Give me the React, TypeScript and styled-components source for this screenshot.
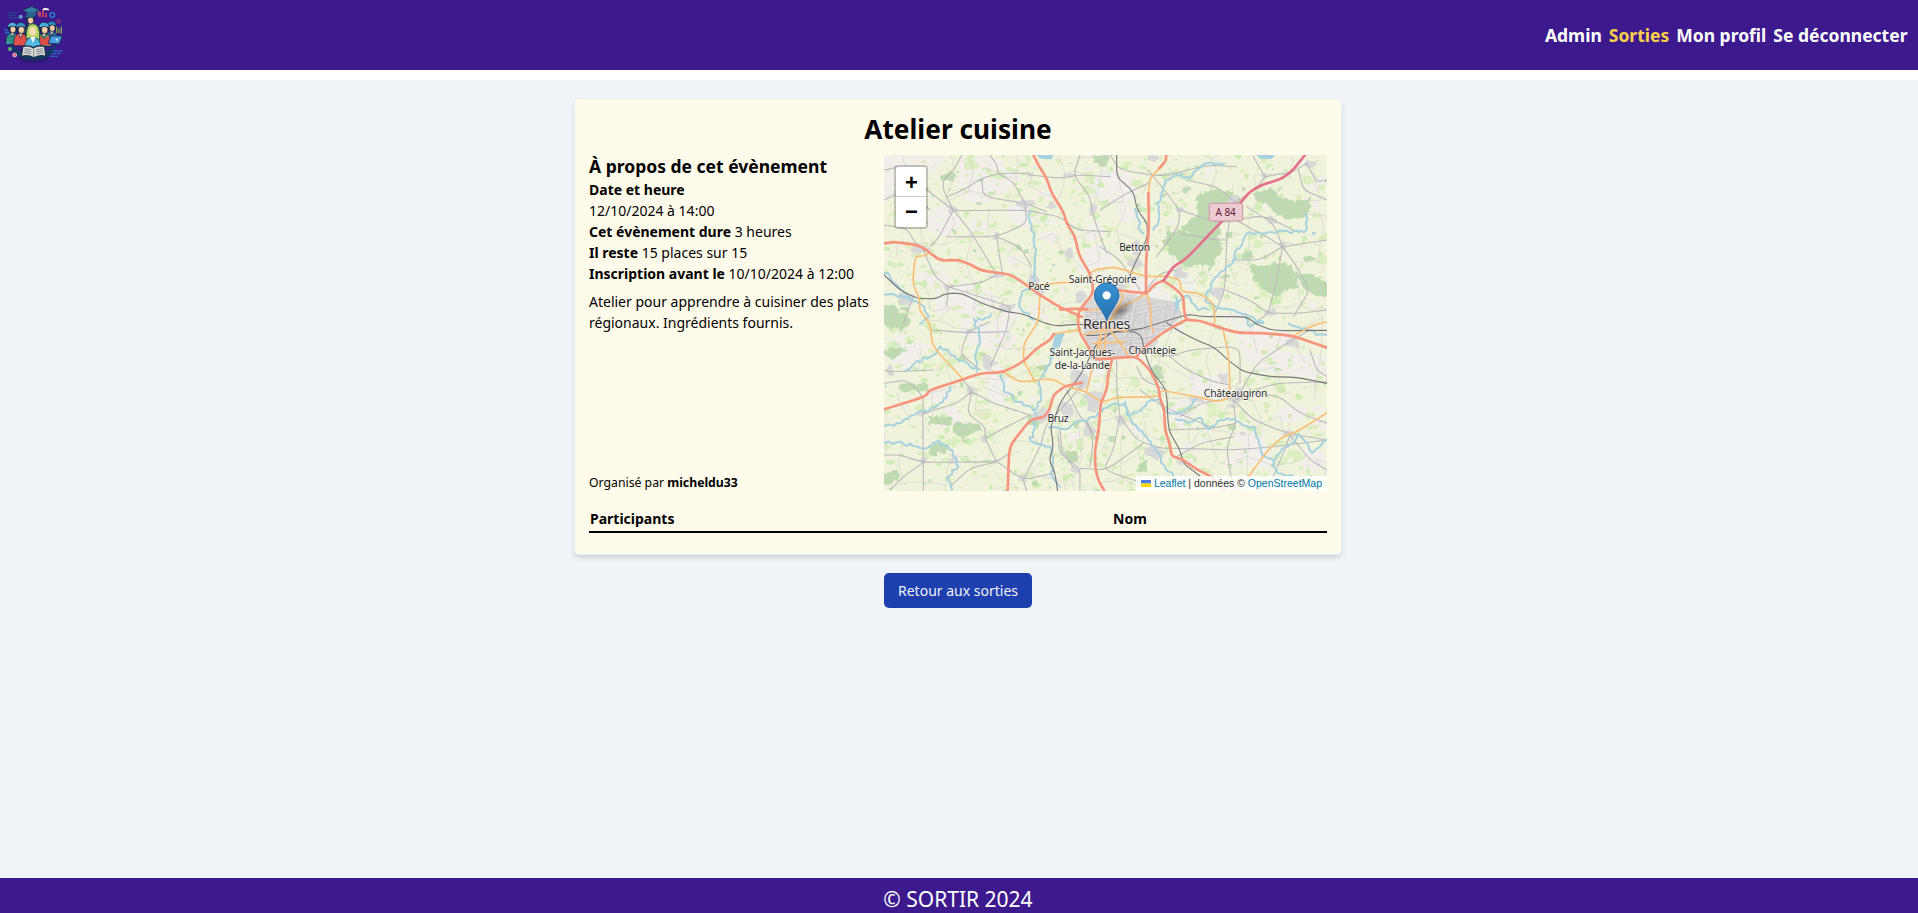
import React from "react";
import styled, { createGlobalStyle } from "styled-components";

const GlobalStyle = createGlobalStyle`
  *, *::before, *::after { box-sizing: border-box; }
  html { font-size: 14px; }
  body {
    margin: 0;
    background: #fff;
    color: #000;
    font-family: "Noto Sans", sans-serif;
    line-height: 1.5;
  }
  h1, h2, p { margin: 0; }
  a { color: inherit; text-decoration: none; }
`;

const Page = styled.div`
  display: flex;
  flex-direction: column;
  height: 100vh;
  overflow: hidden;
`;

const Header = styled.header`
  display: flex;
  align-items: center;
  justify-content: space-between;
  flex: none;
  height: 70px;
  margin-bottom: 10px;
  padding-right: 10.5px;
  background: #3c1a8e;
`;

const LogoLink = styled.a`
  display: block;
  width: 70px;
  height: 70px;
`;

const Nav = styled.nav`
  display: flex;
  gap: 7px;
`;

const NavLink = styled.a<{ $active?: boolean }>`
  color: ${(p) => (p.$active ? "#fdd145" : "#fff")};
  font-size: 17.5px;
  line-height: 24.5px;
  font-weight: 700;
`;

const Main = styled.main`
  display: flex;
  flex: 1;
  flex-direction: column;
  align-items: center;
  padding: 18px 2px 0 0;
  background: #f0f4f8;
`;

const Card = styled.section`
  width: 768px;
  height: 457px;
  padding: 14px;
  border: 1px solid #ebeff5;
  border-radius: 5px;
  background: #fffbeb;
  box-shadow: 0 4px 6px -1px rgba(0, 0, 0, 0.1), 0 2px 4px -2px rgba(0, 0, 0, 0.1);
`;

const Title = styled.h1`
  height: 42px;
  padding-top: 1px;
  font-size: 26.25px;
  line-height: 31.5px;
  font-weight: 700;
  text-align: center;
`;

const Columns = styled.div`
  display: grid;
  grid-template-columns: 295px 443px;
  height: 336px;
`;

const Details = styled.div`
  display: flex;
  flex-direction: column;
  margin-top: -1px;
  font-size: 14px;
  line-height: 21px;
`;

const Subtitle = styled.h2`
  font-size: 17.5px;
  line-height: 24.5px;
  font-weight: 700;
`;

const Description = styled.p`
  margin-top: 7px;
`;

const Organizer = styled.p`
  margin-top: auto;
  font-size: 12.25px;
  line-height: 17.5px;
`;

const Table = styled.table`
  width: 100%;
  margin-top: 15px;
  border-collapse: collapse;
  border-bottom: 2px solid #000;
`;

const HeadCell = styled.th<{ $width: string }>`
  width: ${(p) => p.$width};
  height: 26px;
  padding: 1px 1px 2px;
  font-size: 14px;
  line-height: 21px;
  text-align: left;
`;

const BackButton = styled.a`
  margin-top: 18px;
  padding: 7px 14px;
  border-radius: 5px;
  background: #1e40af;
  color: #eef2fb;
  font-size: 14px;
  line-height: 21px;
`;

const Footer = styled.footer`
  flex: none;
  height: 35px;
  padding: 7px 2px 0 0;
  background: #3c1a8e;
  color: #fff;
  font-size: 21px;
  line-height: 28px;
  text-align: center;
`;

const MapFrame = styled.div`
  position: relative;
  overflow: hidden;
  background: #eef0d8;
  font-family: "Liberation Sans", Arial, sans-serif;
`;

const MapDrawing = styled.svg`
  display: block;
  width: 443px;
  height: 336px;
`;

const ZoomControl = styled.div`
  position: absolute;
  top: 10px;
  left: 10px;
  border: 2px solid rgba(0, 0, 0, 0.2);
  border-radius: 4px;
  background-clip: padding-box;
`;

const ZoomButton = styled.button<{ $last?: boolean }>`
  display: flex;
  align-items: center;
  justify-content: center;
  width: 30px;
  height: 30px;
  padding: ${(p) => (p.$last ? "0 0 0 1px" : "2px 0 0 1px")};
  border: 0;
  border-bottom: ${(p) => (p.$last ? "0" : "1px solid #ccc")};
  border-radius: ${(p) => (p.$last ? "0 0 2px 2px" : "2px 2px 0 0")};
  background: #fff;
  color: #000;
  font: bold 22px "Liberation Sans", Arial, sans-serif;
  line-height: 28px;
`;

const Attribution = styled.div`
  position: absolute;
  right: 0;
  bottom: 0;
  padding: 0 5px;
  background: rgba(255, 255, 255, 0.8);
  color: #333;
  font-size: 10.5px;
  line-height: 15px;
  white-space: nowrap;
  a { color: #0078a8; }
`;

const Flag = styled.svg`
  display: inline;
  width: 10px;
  height: 7px;
  margin-right: 3px;
`;

type Pt = [number, number];

function random(seed: number) {
  let s = seed;
  return () => {
    s = (s * 1664525 + 1013904223) % 4294967296;
    return s / 4294967296;
  };
}

const parse = (text: string): Pt[] =>
  text.split(" ").map((pair) => pair.split(",").map(Number) as Pt);

/* Rounded polyline through the given points. */
function curve(points: Pt[]): string {
  let d = `M${points[0]}`;
  for (let i = 1; i < points.length - 1; i++) {
    const [x, y] = points[i];
    const [a, b] = points[i - 1];
    const [e, f] = points[i + 1];
    d += `L${x + (a - x) * 0.3} ${y + (b - y) * 0.3}Q${x} ${y} ${x + (e - x) * 0.3} ${y + (f - y) * 0.3}`;
  }
  return d + `L${points[points.length - 1]}`;
}

/* Subdivides a line and shakes the new points, for rivers and wood edges. */
function shake(points: Pt[], step: number, amount: number, seed: number): Pt[] {
  const r = random(seed);
  const out: Pt[] = [];
  for (let i = 0; i < points.length - 1; i++) {
    const [x, y] = points[i];
    const [u, v] = points[i + 1];
    const n = Math.max(1, Math.round(Math.hypot(u - x, v - y) / step));
    for (let k = 0; k < n; k++)
      out.push([
        Math.round(x + ((u - x) * k) / n + (r() - 0.5) * amount),
        Math.round(y + ((v - y) * k) / n + (r() - 0.5) * amount),
      ]);
  }
  out.push(points[points.length - 1]);
  return out;
}

function blob(x: number, y: number, w: number, h: number, r: () => number): string {
  const n = 9;
  let d = "";
  for (let i = 0; i < n; i++) {
    const t = (i / n) * Math.PI * 2;
    const k = 0.45 + r() * 0.75;
    d += `${i ? "L" : "M"}${Math.round(x + Math.cos(t) * w * k)} ${Math.round(y + Math.sin(t) * h * k)}`;
  }
  return d + "Z";
}

function scatter(seed: number, count: number, min: number, max: number): string {
  const r = random(seed);
  let d = "";
  for (let i = 0; i < count; i++) {
    const x = 12 + r() * 1329;
    const y = 15 + r() * 1008;
    const s = min + Math.pow(r(), 2.2) * (max - min);
    d += blob(x, y, s * (0.6 + r()), s * (0.5 + r() * 0.7), r);
  }
  return d;
}

/* Irregular mesh of country lanes. */
function lanes(): string {
  const r = random(77);
  const cols = 21;
  const rows = 16;
  const grid: Pt[][] = [];
  for (let j = 0; j <= rows; j++) {
    grid.push([]);
    for (let i = 0; i <= cols; i++)
      grid[j].push([i * 66 + (r() - 0.5) * 56, j * 66 + (r() - 0.5) * 56]);
  }
  let d = "";
  const link = (a: Pt, b: Pt) => {
    d += curve(shake([a, b], 24, 9, Math.floor(r() * 9999)).map((p, i) => (i ? p : a)));
  };
  for (let j = 0; j < rows; j++)
    for (let i = 0; i < cols; i++) {
      if (r() < 0.4) link(grid[j][i], grid[j][i + 1]);
      if (r() < 0.4) link(grid[j][i], grid[j + 1][i]);
    }
  return d;
}

/* Dense street mesh clipped to the city. */
function streets(): string {
  const r = random(12);
  let d = "";
  for (let i = 0; i < 20; i++) {
    const o = 570 + i * 18;
    d += `M${o} 430L${o + (r() - 0.5) * 70} 500L${o + (r() - 0.5) * 90} 640`;
    const p = 430 + i * 11;
    d += `M590 ${p}L720 ${p + (r() - 0.5) * 60}L900 ${p + (r() - 0.5) * 70}`;
  }
  return d;
}

const trunkRoads = [
  "12,280 45,276 110,285 135,297 180,332 235,330 270,343 305,362 390,373 425,395 480,435 540,472 605,500",
  "540,478 600,476 622,478",
  "460,15 475,45 500,85 515,130 550,185 560,220 585,260 597,315 635,380 640,430 606,470 595,490 594,520 600,550 625,590 645,630 700,624 770,620 810,660 835,710 840,745 853,780 855,840 870,885 875,918 910,930 950,958 995,980 1035,1023",
  "858,15 858,32 838,55",
  "805,130 807,235 798,330 798,420 800,430",
  "850,392 825,402 800,430 745,425 720,420 690,424",
  "850,392 885,415 910,440 912,480 918,510 960,512 1010,530 1070,548 1160,550 1240,558 1341,593",
  "918,510 870,535 840,555 790,595 770,620",
  "697,626 685,670 680,720 662,760 656,840 645,900 646,955 655,990 673,1023",
  "383,1023 387,910 395,880 450,810 495,800 510,775 520,735 555,708 605,698",
  "12,778 135,740 150,720 250,688 300,670 370,667 430,635 470,595 510,570 522,552",
].map(parse);

const mainRoads = [
  "150,308 135,317 105,320 98,400 120,450 118,480 150,522 158,590 250,688",
  "445,405 510,403 530,398 605,397 640,360 690,353 710,353 800,380 860,378 900,390 903,425 960,430 1000,460 1005,510 1000,528",
  "480,435 475,515 432,580 430,632 465,695",
  "370,667 420,697 515,685 560,710 620,725 665,758 710,742 835,740 845,720 900,732 950,740 1010,755 1045,745 1050,710 1046,610 1028,535",
  "1341,788 1260,840 1205,862 1160,905 1105,980",
  "522,552 560,545 598,540", "620,725 640,640", "1245,555 1300,525 1341,516",
  "838,55 810,85 806,130", "600,482 655,478 690,474", "800,430 760,455 720,470 700,500 665,540 650,600",
  "800,430 812,470 812,525 820,545", "605,555 690,535 745,545", "720,420 730,440 715,470 690,515",
  "690,540 735,600 745,620", "665,540 660,580 665,620", "640,580 735,575", "680,515 672,620",
].map(parse);

const railways = [
  "12,375 60,420 110,445 165,447 200,430 245,430 310,462 380,485 430,492 490,518 530,528 600,522 650,530",
  "620,556 655,556 720,545 790,535 860,512 925,493 970,500 1100,500 1130,523 1180,542 1341,541",
  "700,545 765,545 785,560 795,610 815,665 860,720 865,840 900,900 910,940 960,978",
  "860,518 900,545 960,575 1000,590 1050,635 1090,665 1170,680 1250,682 1341,700",
  "710,15 710,80 760,125 772,180 802,220 802,265 760,350 748,385",
  "700,545 650,580 630,620 610,660 580,705 545,750 525,800 512,830 520,890 508,930 525,970 533,1023",
].map(parse);

const rivers = [
  "455,180 445,215 465,260 460,340 462,395 430,430 420,470 450,495 460,510",
  "12,365 50,400 90,450 125,465 145,500 120,522",
  "12,438 60,435 90,450",
  "285,510 300,560 290,610 290,665",
  "80,665 100,640 160,615 185,590 230,630 290,655",
  "12,830 60,820 90,795 140,782 190,760 210,710",
  "12,880 60,878 130,895 180,875 215,905 235,950 205,980 215,1023",
  "365,675 375,720 400,745 460,780 480,750 480,690 510,640 520,590 545,555",
  "470,790 460,840 450,875 515,892",
  "510,830 560,840 610,810 650,800 670,775 735,757 745,800 790,780 800,755 840,750 860,790 905,790 950,745",
  "890,805 920,820 960,800 985,835 1010,810 1060,805 1090,830 1125,835 1145,920 1180,930 1210,900 1240,880 1260,855 1300,905 1341,870",
  "735,760 755,820 790,850 830,900 850,950 880,980",
  "1183,930 1188,970 1240,980",
  "1035,45 980,42 950,60 930,85 890,75 860,95 850,130 835,160 840,200 820,240",
  "1280,195 1275,245 1230,245 1160,250 1100,250 1078,290 1055,340 1010,380 985,425",
  "768,180 780,215 775,240 790,250",
  "985,425 975,450 1010,475 1090,490 1110,500 1150,520",
  "890,440 885,480 920,435 950,475 985,480",
  "1100,500 1110,525 1150,515",
  "1230,520 1290,545 1341,555",
  "335,490 310,510 285,512", "515,892 520,950 515,975 540,1010",
].map((t, i) => shake(parse(t), 10, 11, 40 + i));

const grayRoads = [
  "245,15 225,55 190,90 190,120 220,180", "330,15 350,45 355,70 400,97 435,160", "218,182 435,180 540,200 590,240 690,245",
  "220,180 265,235 300,290 350,375", "220,180 175,265 150,290", "12,60 60,50 140,120 220,180", "12,150 80,120 150,180",
  "305,85 310,140 435,160 500,185", "305,85 250,120 200,140", "305,85 360,70 450,70", "450,75 540,85 600,75 690,80",
  "600,15 580,75 630,140 640,200 680,310", "435,165 440,220 350,260 200,260", "350,260 360,330 370,380", "350,260 420,290 455,350",
  "12,225 80,235 110,285", "130,300 165,380 205,410 200,470", "205,410 300,400 350,375", "390,470 300,440 205,410",
  "100,440 70,520", "390,470 380,540 330,650", "158,540 260,548 385,545", "265,545 330,515", "265,545 240,610 300,660",
  "12,660 30,665 160,660", "12,700 80,690 130,740 128,790 130,935", "275,725 250,690", "275,725 340,760 450,795", "275,725 230,760 130,790",
  "275,725 262,790 315,830 315,865 350,935", "315,865 380,830 450,795", "12,915 60,915 130,937 220,937 350,935 387,910",
  "130,937 130,1023", "130,937 70,980 30,1020", "350,935 430,990 520,970", "350,935 270,955 210,1010", "430,990 440,1023",
  "480,890 430,990", "480,890 500,820 560,760 610,700", "535,860 540,910 600,955 600,1023", "600,955 680,960 790,880",
  "620,810 640,870 630,950", "560,720 600,800 620,820 650,870", "540,840 545,900 580,950",
  "690,15 720,60 850,80 980,45 1070,50", "660,180 740,130 805,100", "660,290 720,330 780,420", "805,60 900,180 895,230 830,320",
  "900,180 960,200 1020,220 1150,195 1240,240", "900,250 1010,270 1040,270", "1048,215 1040,270 1035,420 1000,500",
  "920,90 1010,110 1070,160", "1060,160 1130,115 1155,80", "1155,80 1120,20", "1155,80 1240,65 1280,40", "1280,40 1310,95 1341,90",
  "1255,60 1270,120 1341,150", "1070,210 1120,240 1160,260 1208,290", "1208,290 1140,330 1060,330", "1208,290 1190,390 1165,490 1120,522",
  "1208,290 1250,350 1290,420 1240,500", "1208,290 1341,270", "1208,290 1180,220 1100,170", "1035,420 1110,450 1165,490 1260,490 1341,480",
  "890,360 840,370 780,440", "870,620 920,660 1000,695 1050,705", "780,600 870,620 930,600 1046,590", "770,650 790,690 860,720",
  "710,630 710,720 720,800", "720,800 770,870 840,895 890,895 1060,900 1180,890 1341,870", "720,800 700,900 670,960 790,1000",
  "1060,750 1068,820 1040,890 1050,970 1070,1023", "1068,820 1000,835 865,840", "1068,750 1150,710 1200,700 1341,695",
  "1068,750 1130,640 1220,580 1290,540", "1060,750 1120,810 1220,850 1341,870", "1130,730 1200,740 1260,790 1341,820",
  "1050,745 960,760 900,800", "1290,600 1310,660 1341,680", "1230,855 1210,910 1160,1023", "1080,700 1080,600 1046,590",
  "1230,855 1290,930 1341,960", "890,920 960,880 1060,860", "780,720 850,770 1000,835",
].map(parse);

const forests = [
  "950,140 990,120 1050,125 1085,150 1060,190 1000,215 990,250 940,250 905,240 955,190",
  "860,245 905,240 940,255 1015,255 1030,300 1000,345 920,348 880,320 850,275",
  "905,235 960,190 1030,195 1015,265 940,260",
  "1120,130 1170,115 1210,145 1250,155 1290,140 1290,190 1255,208 1200,200 1160,165 1130,155",
  "1110,345 1160,350 1180,335 1240,350 1260,410 1210,425 1190,440 1150,415 1120,385",
  "1250,365 1300,380 1341,390 1341,440 1290,430 1260,400", "1090,305 1120,305 1120,325 1085,335",
  "12,470 40,465 65,490 100,510 60,540 12,530", "60,705 140,700 145,725 60,722", "450,795 480,800 470,835 440,820",
  "145,800 220,800 215,825 150,820", "230,815 300,820 300,840 245,865 215,840", "150,890 180,870 205,890 200,905 150,915",
  "555,900 590,900 595,935 560,940", "640,15 685,18 682,50 645,40", "660,15 685,15 680,45 660,50", "810,650 845,645 845,690 815,680",
  "180,75 215,65 235,80 210,95 185,92", "12,970 50,965 60,985 30,1000 12,1000", "480,650 510,645 500,665",
  "770,960 800,930 805,970", "1100,800 1110,810 1105,825", "12,600 65,590 80,605 40,625 12,620",
].map((t, i) => {
  const p = parse(t);
  return "M" + shake([...p, p[0]], 8, 12, 200 + i).join("L") + "Z";
});

const towns: [number, number, number, number][] = [
  [125, 295, 38, 18], [218, 180, 18, 16], [435, 162, 30, 14], [515, 168, 18, 14], [570, 75, 20, 10], [640, 175, 20, 26], [570, 310, 18, 22],
  [350, 255, 12, 14], [80, 445, 34, 20], [205, 410, 16, 12], [385, 472, 30, 16], [460, 390, 28, 22], [480, 425, 24, 18], [325, 640, 28, 26],
  [275, 720, 20, 18], [30, 660, 16, 18], [130, 790, 18, 10], [220, 930, 18, 14], [130, 933, 12, 12], [345, 380, 24, 8], [430, 985, 16, 14],
  [480, 800, 36, 26], [585, 960, 20, 14], [600, 690, 40, 44], [640, 750, 34, 34], [560, 780, 22, 30], [630, 840, 18, 30], [265, 545, 14, 10],
  [655, 620, 46, 24], [770, 575, 60, 40], [720, 810, 16, 26], [825, 905, 30, 26], [1070, 735, 32, 24], [1055, 770, 16, 8], [1030, 685, 16, 22],
  [950, 750, 26, 8], [1230, 852, 20, 12], [1240, 580, 22, 22], [1175, 210, 14, 14], [1060, 150, 20, 20], [1210, 285, 16, 14], [1170, 487, 20, 12],
  [1155, 80, 16, 12], [1290, 40, 24, 14], [1010, 430, 28, 20], [900, 370, 24, 22], [900, 180, 12, 12], [770, 290, 22, 26], [820, 25, 20, 14],
  [450, 75, 14, 10], [600, 440, 24, 20], [1090, 850, 10, 8], [700, 410, 44, 22], [765, 340, 24, 14], [315, 865, 14, 12], [900, 935, 16, 12],
];

const townPath = (() => {
  const r = random(5);
  return towns.map(([x, y, w, h]) => blob(x, y, w, h, r)).join("");
})();

const labels: { text: string; x: number; y: number; w: number; size: number }[] = [
  { text: "Pacé", x: 477, y: 419, w: 64, size: 31 },
  { text: "Saint-Grégoire", x: 668, y: 400, w: 203, size: 31 },
  { text: "Betton", x: 764, y: 304, w: 93, size: 31 },
  { text: "Rennes", x: 680, y: 538, w: 142, size: 43 },
  { text: "Saint-Jacques-", x: 607, y: 619, w: 197, size: 31 },
  { text: "de-la-Lande", x: 607, y: 656, w: 165, size: 31 },
  { text: "Chantepie", x: 817, y: 611, w: 143, size: 31 },
  { text: "Châteaugiron", x: 1067, y: 740, w: 191, size: 31 },
  { text: "Bruz", x: 534, y: 817, w: 63, size: 31 },
];

function Lines({ items, color, width }: { items: Pt[][]; color: string; width: number }) {
  return (
    <path
      d={items.map(curve).join("")}
      fill="none"
      stroke={color}
      strokeWidth={width}
      strokeLinejoin="round"
      strokeLinecap="round"
    />
  );
}

function RegionMap() {
  return (
    <MapDrawing viewBox="12 15 1329 1008" preserveAspectRatio="none">
      <defs>
        <linearGradient id="pin" x1="0" y1="0" x2="0" y2="1">
          <stop offset="0" stopColor="#3a92d4" />
          <stop offset="1" stopColor="#236fae" />
        </linearGradient>
        <radialGradient id="shade">
          <stop offset="0" stopColor="#333" stopOpacity=".55" />
          <stop offset="1" stopColor="#333" stopOpacity="0" />
        </radialGradient>
        <clipPath id="city">
          <path d="M615 470L680 430L790 440L890 470L905 505L830 555L765 615L650 615L610 560Z" />
        </clipPath>
      </defs>
      <rect x="12" y="15" width="1329" height="1008" fill="#f0f2db" />
      <path d={scatter(3, 110, 10, 75)} fill="#f2eee9" />
      <path d="M12 15H200L170 60L120 90L60 130L12 160ZM240 30L330 20L430 90L300 170L230 130ZM1180 600L1341 620L1341 690L1130 660Z" fill="#f2eee9" />
      <path d={scatter(8, 950, 2, 17)} fill="#dceec0" />
      <path d={scatter(21, 600, 2, 13)} fill="#d0ecb6" />
      <path d={scatter(34, 170, 2, 13)} fill="#c0dcb2" />
      <path d={scatter(55, 240, 1, 4)} fill="#f7dfc8" />
      <path d={forests.join("")} fill="#bfdab1" />
      <path d={scatter(91, 40, 2, 5)} fill="#aad3df" />
      <path d={townPath} fill="#d9d8d9" />
      <path d="M610 470L650 430L740 430L800 442L890 455L908 500L850 540L800 590L750 620L650 625L610 570Z" fill="#d8d5d6" />
      <path d={streets()} clipPath="url(#city)" fill="none" stroke="#e9e7e8" strokeWidth="2" />
      <path d={streets()} clipPath="url(#city)" fill="none" stroke="#c0bdc0" strokeWidth="1.4" transform="translate(6 3)" />
      <path d={lanes()} fill="none" stroke="#cfcfcd" strokeWidth="1.7" />
      <Lines items={grayRoads} color="#b9b8bd" width={3.2} />
      <Lines items={rivers} color="#a6d2e0" width={6} />
      <path d="M525 550L555 545L540 590L515 600ZM470 15H520L515 28L480 26ZM1130 15H1185L1175 27L1140 26Z" fill="#a6d2e0" />
      <Lines items={railways} color="#77777a" width={3.4} />
      <Lines items={mainRoads} color="#fbc078" width={5} />
      <Lines items={trunkRoads} color="#f8947c" width={8} />
      <Lines items={[parse("1275,15 1235,65 1200,88 1145,105 1110,125 1080,160 1010,230 920,325 880,350 850,392")]} color="#e5708c" width={8} />
      <rect x="988" y="160" width="100" height="53" rx="6" fill="#eccbd3" stroke="#d293a5" strokeWidth="3" />
      <text x="1037" y="197" textAnchor="middle" textLength="61" fontSize="30" fontFamily="Noto Sans, sans-serif" fill="#6a1a3c">A 84</text>
      <ellipse cx="722" cy="482" rx="50" ry="24" fill="url(#shade)" transform="rotate(-38 722 482)" />
      {labels.map((l) => (
        <text
          key={l.text}
          x={l.x}
          y={l.y}
          fontSize={l.size}
          textLength={l.w}
          textAnchor="middle"
          fontFamily="Noto Sans, sans-serif"
          fill="#2b2b2b"
          stroke="#fff"
          strokeOpacity=".65"
          strokeWidth="5"
          strokeLinejoin="round"
          paintOrder="stroke"
        >
          {l.text}
        </text>
      ))}
      <path d="M680 513C672 484 643 460 643 435A37 36 0 0 1 717 435C717 460 688 484 680 513Z" fill="url(#pin)" stroke="#2b6fa5" strokeWidth="3" />
      <circle cx="680" cy="436" r="12.5" fill="#fff" />
    </MapDrawing>
  );
}

function Person({ x, y, s, robe, cap }: { x: number; y: number; s: number; robe: string; cap: string }) {
  return (
    <g transform={`translate(${x} ${y}) scale(${s})`} stroke="#12203f" strokeWidth="2">
      <path d="M-20 50Q-22 15 0 14Q22 15 20 50Z" fill={robe} />
      <path d="M-6 14L0 28L6 14Z" fill="#f6e3c8" />
      <circle r="13" fill="#1b2444" />
      <ellipse cx="2" cy="4" rx="9" ry="11" fill="#f8cfa4" />
      <path d="M-14 -1Q-14 -17 0 -17Q14 -17 15 -2Q0 -9 -14 -1Z" fill={cap} />
    </g>
  );
}

function Logo() {
  return (
    <svg width="70" height="70" viewBox="0 0 210 210">
      <path d="M28 128Q100 200 172 128L160 155Q145 178 100 180Q52 178 40 152Z" fill="#123a63" />
      <path d="M24 38H52M24 46H48M26 54H54" stroke="#25418f" strokeWidth="4" />
      <path d="M120 35V52M129 30V52M138 40V52" stroke="#d9485c" strokeWidth="5" />
      <circle cx="157" cy="45" r="7" fill="none" stroke="#2787c9" strokeWidth="4" />
      <circle cx="176" cy="64" r="5" fill="none" stroke="#bd3c6b" strokeWidth="3" />
      <circle cx="62" cy="50" r="6" fill="#5ba5be" />
      <path d="M170 80V100M177 86V100M184 80V101" stroke="#7fa943" strokeWidth="4" />
      <path d="M127 30Q132 20 139 25Q147 23 148 31Z" fill="#f3f7fa" />
      <path d="M12 90H26M15 98H28" stroke="#2967b8" strokeWidth="5" />
      <path d="M160 153H187M155 161H182M150 169H174" stroke="#246fba" strokeWidth="4" strokeDasharray="13 2" />
      <Person x={90} y={57} s={1} robe="#203e62" cap="#286e93" />
      <path d="M67 31L95 19L119 31L92 42Z" fill="#347ba1" stroke="#142443" strokeWidth="2" />
      <path d="M80 37V48Q94 54 108 46V35" fill="#28618a" />
      <path d="M115 33V47" stroke="#eab65a" strokeWidth="2" />
      <Person x={37} y={84} s={0.98} robe="#2f8f86" cap="#52b1dc" />
      <Person x={155} y={80} s={0.95} robe="#2e6a94" cap="#2e8cc0" />
      <Person x={62} y={85} s={1.05} robe="#e3504a" cap="#3c93c4" />
      <Person x={132} y={85} s={1.08} robe="#3fa568" cap="#45b2dc" />
      <path d="M120 106L132 118L146 106L152 136H120Z" fill="#dd4c48" />
      <path d="M78 116Q77 71 99 71Q122 72 119 118Z" fill="#b5d665" stroke="#294e4b" strokeWidth="3" />
      <ellipse cx="98" cy="94" rx="10" ry="13" fill="#f9dcb6" />
      <path d="M73 146Q76 110 98 112Q121 111 123 146Z" fill="#55b8e0" stroke="#17304f" strokeWidth="2" />
      <path d="M91 111L99 129L106 111Z" fill="#fff" />
      <path d="M145 130L153 108H187L178 132Z" fill="#4a9ee0" stroke="#173764" strokeWidth="3" />
      <circle cx="170" cy="119" r="3" fill="#fff" />
      <path d="M68 140Q86 134 100 143Q116 133 134 140L138 169Q115 163 101 174Q85 163 64 170Z" fill="#d9d9d2" stroke="#17304f" strokeWidth="4" />
      <path d="M101 143V171M74 146L94 149M73 152L94 155M72 158L94 161M109 149L128 146M109 155L129 152M109 161L131 158" stroke="#526675" strokeWidth="2" />
      <circle cx="30" cy="147" r="6" fill="#5fb76f" />
      <circle cx="44" cy="165" r="6" fill="#e76a8b" stroke="#f7d5df" strokeWidth="2" />
      <circle cx="24" cy="129" r="4" fill="#49a0d6" />
      <path id="logo-arc" d="M59 179Q100 199 146 179" fill="none" />
      <text fontFamily="Noto Sans, sans-serif" fontSize="13" fontWeight="700" fill="#151d4d" letterSpacing="1">
        <textPath href="#logo-arc">SORTIR.COM</textPath>
      </text>
    </svg>
  );
}

export default function App() {
  return (
    <Page>
      <GlobalStyle />
      <Header>
        <LogoLink href="#"><Logo /></LogoLink>
        <Nav>
          <NavLink href="#">Admin</NavLink>
          <NavLink href="#" $active>Sorties</NavLink>
          <NavLink href="#">Mon profil</NavLink>
          <NavLink href="#">Se déconnecter</NavLink>
        </Nav>
      </Header>
      <Main>
        <Card>
          <Title>Atelier cuisine</Title>
          <Columns>
            <Details>
              <Subtitle>À propos de cet évènement</Subtitle>
              <p><b>Date et heure</b></p>
              <p>12/10/2024 à 14:00</p>
              <p><b>Cet évènement dure</b> 3 heures</p>
              <p><b>Il reste</b> 15 places sur 15</p>
              <p><b>Inscription avant le</b> 10/10/2024 à 12:00</p>
              <Description>Atelier pour apprendre à cuisiner des plats régionaux. Ingrédients fournis.</Description>
              <Organizer>Organisé par <b>micheldu33</b></Organizer>
            </Details>
            <MapFrame>
              <RegionMap />
              <ZoomControl>
                <ZoomButton>+</ZoomButton>
                <ZoomButton $last>−</ZoomButton>
              </ZoomControl>
              <Attribution>
                <a href="#">
                  <Flag viewBox="0 0 12 8" preserveAspectRatio="none">
                    <path fill="#4C7BE1" d="M0 0h12v4H0z" />
                    <path fill="#FFD500" d="M0 4h12v4H0z" />
                  </Flag>
                  Leaflet
                </a>{" "}
                | données © <a href="#">OpenStreetMap</a>
              </Attribution>
            </MapFrame>
          </Columns>
          <Table>
            <thead>
              <tr>
                <HeadCell $width="523px">Participants</HeadCell>
                <HeadCell $width="215px">Nom</HeadCell>
              </tr>
            </thead>
          </Table>
        </Card>
        <BackButton href="#">Retour aux sorties</BackButton>
      </Main>
      <Footer>© SORTIR 2024</Footer>
    </Page>
  );
}
